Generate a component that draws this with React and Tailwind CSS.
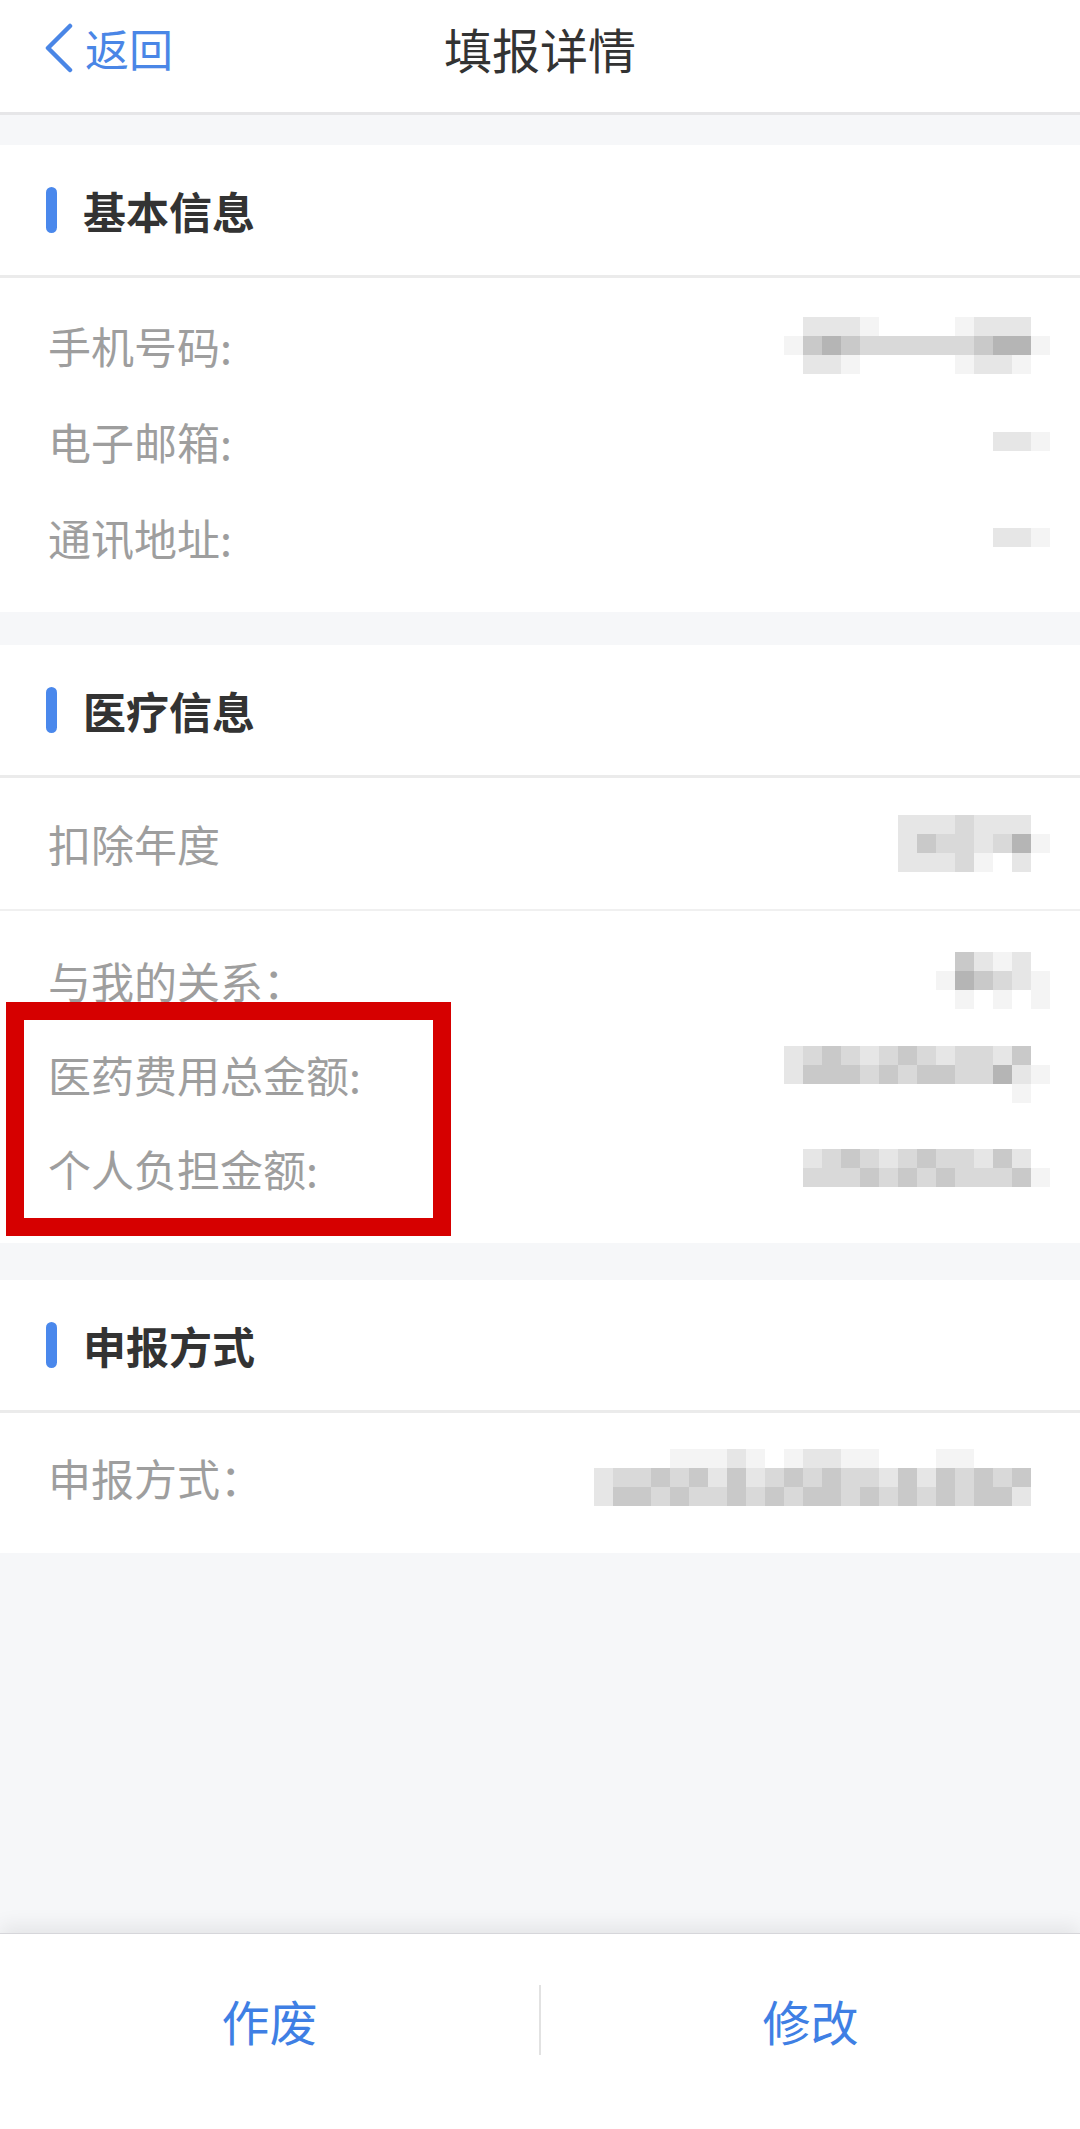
const font = { fontFamily: '"Noto Sans CJK SC", "Noto Sans", sans-serif' };

// shade per mosaic cell; the blurred values are privacy mosaics in the source
const shade = {
  '0': 'bg-transparent',
  '1': 'bg-[#f4f4f4]',
  '2': 'bg-[#e6e6e6]',
  '3': 'bg-[#d9d9d9]',
  '4': 'bg-[#c9c9c9]',
  '5': 'bg-[#b5b5b5]',
};

function Mosaic({ rows }) {
  return (
    <div className="flex flex-col">
      {rows.map((r, i) => (
        <div key={i} className="flex">
          {r.split('').map((c, j) => (
            <div key={j} className={`w-[19px] h-[19px] ${shade[c]}`} />
          ))}
        </div>
      ))}
    </div>
  );
}

function SectionTitle({ children }) {
  return (
    <div className="h-[133px] flex items-center pl-[46px] border-b-[3px] border-[#ebebeb]">
      <div className="w-[11px] h-[46px] rounded-full bg-[#4a88ec]" />
      <span className="ml-[26px] text-[43px] font-semibold text-[#333333] leading-none">{children}</span>
    </div>
  );
}

function Row({ label, value, h = 'h-[96px]' }) {
  return (
    <div className={`${h} flex items-center justify-between pl-[48px] pr-[30px]`}>
      <span className="text-[43px] text-[#9e9e9e] leading-none">{label}</span>
      {value}
    </div>
  );
}

export default function App() {
  return (
    <div className="min-h-screen flex flex-col bg-[#f6f7f9]" style={font}>
      <div className="h-[115px] bg-white border-b-[3px] border-[#e6e6e8]">
        <div className="h-[95px] relative flex items-center justify-center">
          <div className="absolute left-[44px] top-0 h-full flex items-center text-[#4a86e6]">
            <svg width="30" height="50" viewBox="0 0 30 50" fill="none">
              <path d="M26 3 L4 25 L26 47" stroke="currentColor" strokeWidth="4.5" strokeLinecap="round" strokeLinejoin="round" />
            </svg>
            <span className="ml-[11px] text-[44px] leading-none">返回</span>
          </div>
          <span className="text-[48px] text-[#333333] leading-none">填报详情</span>
        </div>
      </div>

      <div className="mt-[30px] bg-white">
        <SectionTitle>基本信息</SectionTitle>
        <div className="pt-[19px] pb-[27px]">
          <Row
            label="手机号码:"
            value={<Mosaic rows={['02221000012220', '14543333334551', '02210000012210']} />}
          />
          <Row label="电子邮箱:" value={<Mosaic rows={['221']} />} />
          <Row label="通讯地址:" value={<Mosaic rows={['221']} />} />
        </div>
      </div>

      <div className="mt-[33px] bg-white">
        <SectionTitle>医疗信息</SectionTitle>
        <div className="h-[133px] flex items-center justify-between pl-[48px] pr-[30px] border-b-2 border-[#f0f0f0]">
          <span className="text-[43px] text-[#9e9e9e] leading-none">扣除年度</span>
          <Mosaic rows={['22232220', '24332351', '22231020']} />
        </div>
        <div className="relative pt-[22px] pb-[28px]">
          <Row
            h="h-[94px]"
            label="与我的关系："
            value={<Mosaic rows={['042120', '154321', '010101']} />}
          />
          <Row
            h="h-[94px]"
            label="医药费用总金额:"
            value={<Mosaic rows={['23432343233240', '24443434433521', '00000000000010']} />}
          />
          <Row
            h="h-[94px]"
            label="个人负担金额:"
            value={<Mosaic rows={['2343234332420', '3334343433341']} />}
          />
          <div className="absolute top-[91px] left-[6px] w-[445px] h-[234px] border-[18px] border-[#d60000]" />
        </div>
      </div>

      <div className="mt-[37px] bg-white">
        <SectionTitle>申报方式</SectionTitle>
        <div className="pt-[16px] pb-[28px]">
          <Row
            label="申报方式："
            value={
              <Mosaic
                rows={[
                  '000011121012211000110000',
                  '233434242343433242434340',
                  '244343343434434343434420',
                ]}
              />
            }
          />
        </div>
      </div>

      <div className="flex-1" />

      <div className="h-[196px] bg-white border-t border-[#d6d6da] shadow-[0_-8px_18px_rgba(0,0,0,0.07)]">
        <div className="h-[172px] flex items-center">
          <button className="flex-1 text-[48px] text-[#3f7fe4] leading-none">作废</button>
          <div className="w-[2px] h-[70px] bg-[#e2e2e2]" />
          <button className="flex-1 text-[48px] text-[#3f7fe4] leading-none">修改</button>
        </div>
      </div>
    </div>
  );
}
